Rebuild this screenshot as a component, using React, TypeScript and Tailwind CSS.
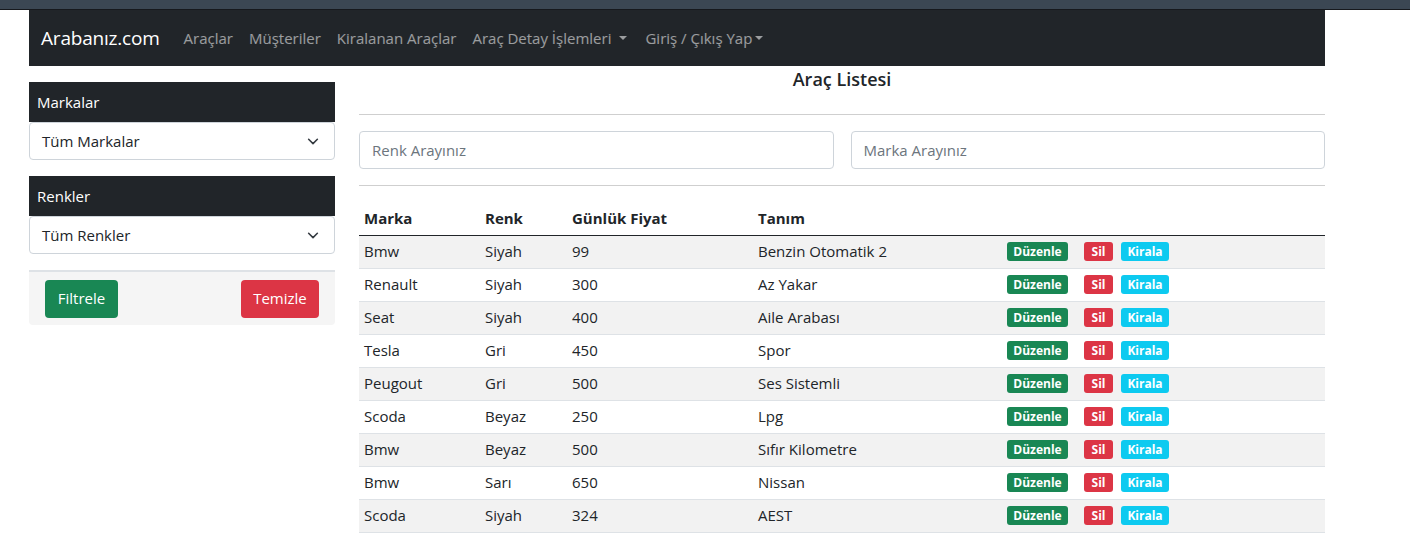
import React from 'react';

const cars = [
  { marka: 'Bmw', renk: 'Siyah', fiyat: 99, tanim: 'Benzin Otomatik 2' },
  { marka: 'Renault', renk: 'Siyah', fiyat: 300, tanim: 'Az Yakar' },
  { marka: 'Seat', renk: 'Siyah', fiyat: 400, tanim: 'Aile Arabası' },
  { marka: 'Tesla', renk: 'Gri', fiyat: 450, tanim: 'Spor' },
  { marka: 'Peugout', renk: 'Gri', fiyat: 500, tanim: 'Ses Sistemli' },
  { marka: 'Scoda', renk: 'Beyaz', fiyat: 250, tanim: 'Lpg' },
  { marka: 'Bmw', renk: 'Beyaz', fiyat: 500, tanim: 'Sıfır Kilometre' },
  { marka: 'Bmw', renk: 'Sarı', fiyat: 650, tanim: 'Nissan' },
  { marka: 'Scoda', renk: 'Siyah', fiyat: 324, tanim: 'AEST' },
];

const Caret = ({ tight }: { tight?: boolean }) => (
  <span className={`inline-block align-middle w-0 h-0 border-l-[4px] border-r-[4px] border-t-[4px] border-l-transparent border-r-transparent border-t-current mb-[3px] ${tight ? 'ml-[3px]' : 'ml-[8px]'}`} />
);

const Chevron = () => (
  <svg width="14" height="14" viewBox="0 0 16 16" className="text-[#343a40] mr-[2px]">
    <path d="M3 6l5 5 5-5" fill="none" stroke="currentColor" strokeWidth="1.8" strokeLinecap="round" strokeLinejoin="round" />
  </svg>
);

const SelectBox = ({ label }: { label: string }) => (
  <div className="h-[38px] border border-[#ced4da] rounded-[4px] bg-white flex items-center justify-between pl-3 pr-3 text-[#212529]">
    <span>{label}</span>
    <Chevron />
  </div>
);

const App = () => {
  return (
    <div className="min-h-screen bg-white text-[16px] text-[#212529]" style={{ fontFamily: '"Open Sans", "Noto Sans", sans-serif' }}>
      {/* ust serit */}
      <div className="h-[9px] bg-[#3b4753]" />
      <div className="h-px bg-[#16191d]" />

      <div className="ml-[29px] w-[1296px]">
        <nav className="h-[56px] bg-[#212529] flex items-center px-3">
          <span className="text-white text-[19px] mr-[16px] tracking-[-0.2px]">Arabanız.com</span>
          <div className="flex items-center text-[15px] text-white/55">
            <span className="px-2">Araçlar</span>
            <span className="px-2">Müşteriler</span>
            <span className="px-2">Kiralanan Araçlar</span>
            <span className="px-2">Araç Detay İşlemleri<Caret /></span>
            <span className="px-2 ml-[2px]">Giriş / Çıkış Yap<Caret tight /></span>
          </div>
        </nav>

        <div className="flex gap-6">
          {/* sol panel */}
          <div className="w-[306px] pt-4 text-[15px]">
            <div className="h-10 bg-[#212529] text-white flex items-center px-2">Markalar</div>
            <SelectBox label="Tüm Markalar" />
            <div className="h-10 bg-[#212529] text-white flex items-center px-2 mt-4">Renkler</div>
            <SelectBox label="Tüm Renkler" />
            <div className="mt-4 border-t-2 border-[#dee2e6] bg-[#f5f5f5] rounded-b-[4px] h-[55px] flex items-center justify-between px-4">
              <button className="h-[38px] w-[73px] rounded-[4px] bg-[#198754] text-white">Filtrele</button>
              <button className="h-[38px] w-[78px] rounded-[4px] bg-[#dc3545] text-white">Temizle</button>
            </div>
          </div>

          {/* ana icerik */}
          <div className="flex-1">
            <h5 className="text-center text-[18px] font-semibold leading-[26px]">Araç Listesi</h5>
            <hr className="mt-[22px] border-t border-[#cfcfcf]" />
            <div className="flex gap-[17px] mt-4">
              <input className="flex-1 h-[38px] border border-[#ced4da] rounded-[4px] px-3 text-[15px] placeholder:text-[#6c757d]" placeholder="Renk Arayınız" />
              <input className="flex-1 h-[38px] border border-[#ced4da] rounded-[4px] px-3 text-[15px] placeholder:text-[#6c757d]" placeholder="Marka Arayınız" />
            </div>
            <hr className="mt-4 border-t border-[#cfcfcf]" />

            <table className="mt-4 w-full border-collapse text-[15px]">
              <thead>
                <tr className="border-b border-[#212529]">
                  <th className="w-[121px] text-left font-bold px-[5px] h-[33px]">Marka</th>
                  <th className="w-[87px] text-left font-bold px-[5px]">Renk</th>
                  <th className="w-[186px] text-left font-bold px-[5px]">Günlük Fiyat</th>
                  <th className="w-[249px] text-left font-bold px-[5px]">Tanım</th>
                  <th />
                </tr>
              </thead>
              <tbody>
                {cars.map((c, i) => (
                  <tr key={i} className={`border-b border-[#dee2e6] h-[33px] ${i % 2 === 0 ? 'bg-[#f2f2f2]' : 'bg-white'}`}>
                    <td className="px-[5px]">{c.marka}</td>
                    <td className="px-[5px]">{c.renk}</td>
                    <td className="px-[5px]">{c.fiyat}</td>
                    <td className="px-[5px]">{c.tanim}</td>
                    <td className="px-[5px]">
                      <div className="flex items-center text-[12px] font-bold text-white leading-none">
                        <span className="h-[19px] w-[61px] flex items-center justify-center rounded-[3px] bg-[#198754]">Düzenle</span>
                        <span className="ml-4 h-[19px] w-[29px] flex items-center justify-center rounded-[3px] bg-[#dc3545]">Sil</span>
                        <span className="ml-2 h-[19px] w-[48px] flex items-center justify-center rounded-[3px] bg-[#0dcaf0]">Kirala</span>
                      </div>
                    </td>
                  </tr>
                ))}
              </tbody>
            </table>
          </div>
        </div>
      </div>
    </div>
  );
};

export default App;
